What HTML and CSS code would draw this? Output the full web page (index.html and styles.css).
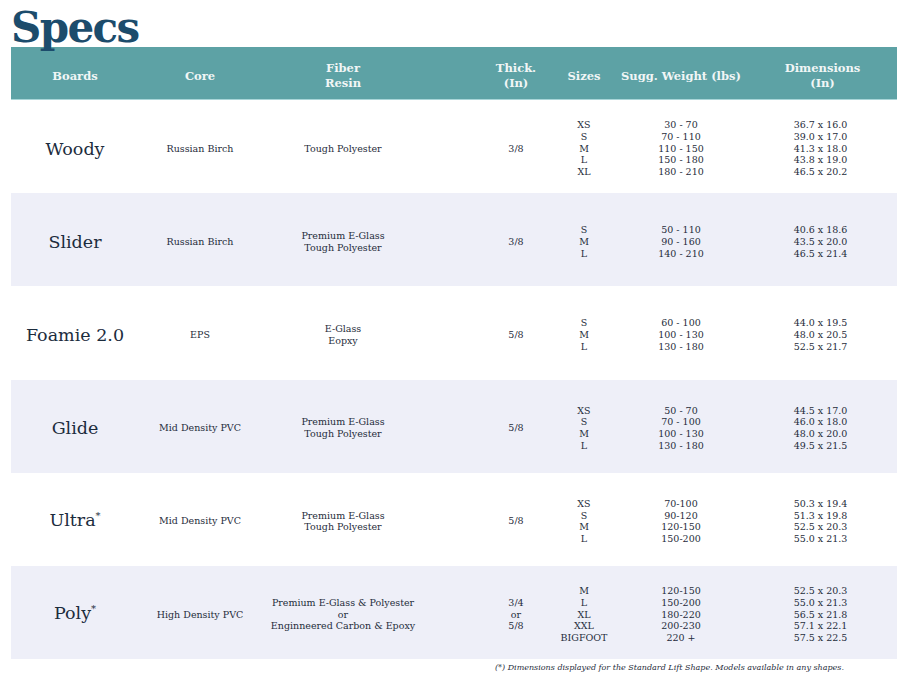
FILE: index.html
```html
<!DOCTYPE html>
<html>
<head>
<meta charset="utf-8">
<link rel="stylesheet" href="styles.css">
</head>
<body>
<div class="page">
  <div class="title">Specs</div>
  <div class="table">
    <div class="row head">
      <div class="c c1">Boards</div>
      <div class="c c2">Core</div>
      <div class="c c3">Fiber<br>Resin</div>
      <div class="c c4">Thick.<br>(In)</div>
      <div class="c c5">Sizes</div>
      <div class="c c6">Sugg. Weight (lbs)</div>
      <div class="c c7">Dimensions<br>(In)</div>
    </div>

    <div class="row">
      <div class="c c1 name">Woody</div>
      <div class="c c2">Russian Birch</div>
      <div class="c c3">Tough Polyester</div>
      <div class="c c4">3/8</div>
      <div class="c c5">XS<br>S<br>M<br>L<br>XL</div>
      <div class="c c6">30 - 70<br>70 - 110<br>110 - 150<br>150 - 180<br>180 - 210</div>
      <div class="c c7">36.7 x 16.0<br>39.0 x 17.0<br>41.3 x 18.0<br>43.8 x 19.0<br>46.5 x 20.2</div>
    </div>

    <div class="row alt">
      <div class="c c1 name">Slider</div>
      <div class="c c2">Russian Birch</div>
      <div class="c c3">Premium E-Glass<br>Tough Polyester</div>
      <div class="c c4">3/8</div>
      <div class="c c5">S<br>M<br>L</div>
      <div class="c c6">50 - 110<br>90 - 160<br>140 - 210</div>
      <div class="c c7">40.6 x 18.6<br>43.5 x 20.0<br>46.5 x 21.4</div>
    </div>

    <div class="row">
      <div class="c c1 name">Foamie 2.0</div>
      <div class="c c2">EPS</div>
      <div class="c c3">E-Glass<br>Eopxy</div>
      <div class="c c4">5/8</div>
      <div class="c c5">S<br>M<br>L</div>
      <div class="c c6">60 - 100<br>100 - 130<br>130 - 180</div>
      <div class="c c7">44.0 x 19.5<br>48.0 x 20.5<br>52.5 x 21.7</div>
    </div>

    <div class="row alt">
      <div class="c c1 name">Glide</div>
      <div class="c c2">Mid Density PVC</div>
      <div class="c c3">Premium E-Glass<br>Tough Polyester</div>
      <div class="c c4">5/8</div>
      <div class="c c5">XS<br>S<br>M<br>L</div>
      <div class="c c6">50 - 70<br>70 - 100<br>100 - 130<br>130 - 180</div>
      <div class="c c7">44.5 x 17.0<br>46.0 x 18.0<br>48.0 x 20.0<br>49.5 x 21.5</div>
    </div>

    <div class="row">
      <div class="c c1 name">Ultra<sup>*</sup></div>
      <div class="c c2">Mid Density PVC</div>
      <div class="c c3">Premium E-Glass<br>Tough Polyester</div>
      <div class="c c4">5/8</div>
      <div class="c c5">XS<br>S<br>M<br>L</div>
      <div class="c c6">70-100<br>90-120<br>120-150<br>150-200</div>
      <div class="c c7">50.3 x 19.4<br>51.3 x 19.8<br>52.5 x 20.3<br>55.0 x 21.3</div>
    </div>

    <div class="row alt">
      <div class="c c1 name">Poly<sup>*</sup></div>
      <div class="c c2">High Density PVC</div>
      <div class="c c3">Premium E-Glass &amp; Polyester<br>or<br>Enginneered Carbon &amp; Epoxy</div>
      <div class="c c4">3/4<br>or<br>5/8</div>
      <div class="c c5">M<br>L<br>XL<br>XXL<br>BIGFOOT</div>
      <div class="c c6">120-150<br>150-200<br>180-220<br>200-230<br>220 +</div>
      <div class="c c7">52.5 x 20.3<br>55.0 x 21.3<br>56.5 x 21.8<br>57.1 x 22.1<br>57.5 x 22.5</div>
    </div>
  </div>
  <div class="note">(*) Dimensions displayed for the Standard Lift Shape. Models available in any shapes.</div>
</div>
</body>
</html>
```

FILE: styles.css
```css
html, body {
  margin: 0;
  padding: 0;
  background: #ffffff;
}

.page {
  width: 900px;
  height: 677px;
  overflow: hidden;
  font-family: "DejaVu Serif", "Liberation Serif", serif;
  color: #1f2d3b;
}

.title {
  height: 47px;
  box-sizing: border-box;
  padding: 7px 0 0 11px;
  font-size: 42px;
  line-height: 1;
  font-weight: bold;
  letter-spacing: -1.6px;
  color: #1c4c6c;
}

.table {
  margin-left: 11px;
  width: 886px;
}

.row {
  display: grid;
  grid-template-columns: 128px 122px 164px 125px 68px 126px 153px;
  height: 93.2px;
  box-sizing: border-box;
  padding-top: 4px;
  align-items: center;
  font-size: 9.5px;
  line-height: 11.8px;
}

.row.alt {
  background: #eeeff8;
}

.row.head {
  height: 53px;
  padding-top: 6px;
  background: #5da2a5;
  border-bottom: 1px solid #a9d6d8;
  color: #f1f6f6;
  font-weight: bold;
  font-size: 11.5px;
  line-height: 15px;
}

.c {
  text-align: center;
  white-space: nowrap;
}

.c4 {
  padding-left: 57px;
}

.head .c7 {
  padding-left: 4px;
}

.name {
  font-size: 17.5px;
  line-height: 20px;
  color: #1c2c3d;
}

.name sup {
  font-size: 10px;
  vertical-align: 0;
  position: relative;
  top: -7px;
}

.note {
  height: 18px;
  line-height: 18px;
  font-size: 8px;
  font-style: italic;
  text-align: right;
  padding-right: 56px;
  color: #1f2d3b;
}
```
